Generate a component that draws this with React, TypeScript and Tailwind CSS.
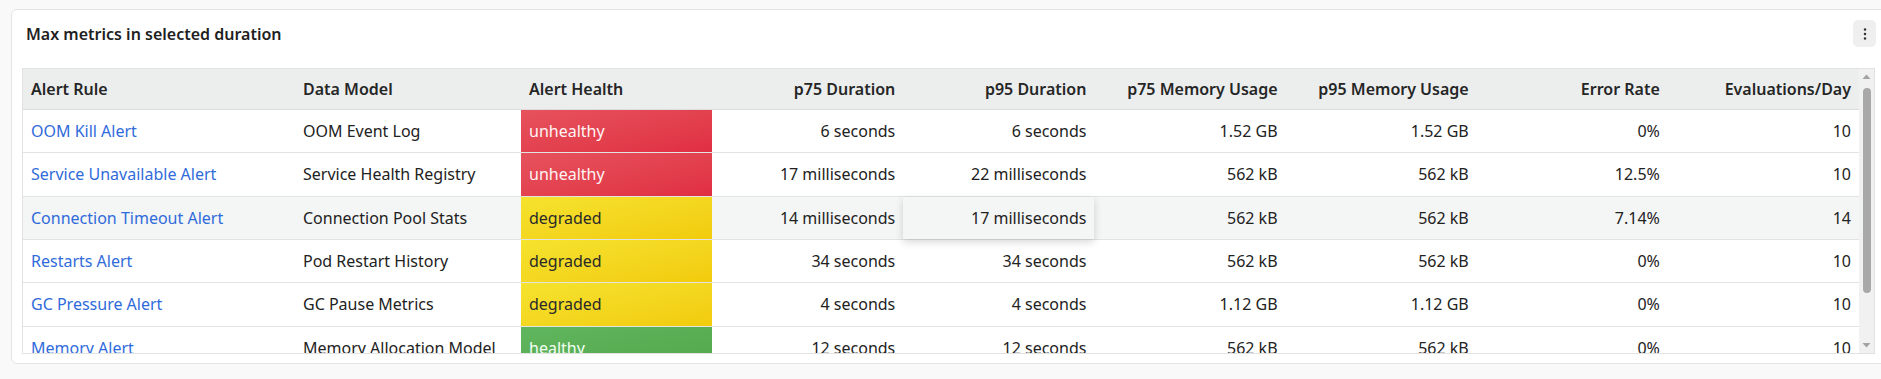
import React from 'react'

type Health = 'unhealthy' | 'degraded' | 'healthy'

interface MetricRow {
  rule: string
  model: string
  health: Health
  p75: string
  p95: string
  p75Mem: string
  p95Mem: string
  errorRate: string
  evals: string
}

const ROWS: MetricRow[] = [
  { rule: 'OOM Kill Alert', model: 'OOM Event Log', health: 'unhealthy', p75: '6 seconds', p95: '6 seconds', p75Mem: '1.52 GB', p95Mem: '1.52 GB', errorRate: '0%', evals: '10' },
  { rule: 'Service Unavailable Alert', model: 'Service Health Registry', health: 'unhealthy', p75: '17 milliseconds', p95: '22 milliseconds', p75Mem: '562 kB', p95Mem: '562 kB', errorRate: '12.5%', evals: '10' },
  { rule: 'Connection Timeout Alert', model: 'Connection Pool Stats', health: 'degraded', p75: '14 milliseconds', p95: '17 milliseconds', p75Mem: '562 kB', p95Mem: '562 kB', errorRate: '7.14%', evals: '14' },
  { rule: 'Restarts Alert', model: 'Pod Restart History', health: 'degraded', p75: '34 seconds', p95: '34 seconds', p75Mem: '562 kB', p95Mem: '562 kB', errorRate: '0%', evals: '10' },
  { rule: 'GC Pressure Alert', model: 'GC Pause Metrics', health: 'degraded', p75: '4 seconds', p95: '4 seconds', p75Mem: '1.12 GB', p95Mem: '1.12 GB', errorRate: '0%', evals: '10' },
  { rule: 'Memory Alert', model: 'Memory Allocation Model', health: 'healthy', p75: '12 seconds', p95: '12 seconds', p75Mem: '562 kB', p95Mem: '562 kB', errorRate: '0%', evals: '10' },
]

const HEALTH_CLASS: Record<Health, string> = {
  unhealthy: 'bg-gradient-to-br from-[#e6525c] to-[#e02e42] text-[#fff4f4]',
  degraded: 'bg-gradient-to-br from-[#f5e32e] to-[#f2cb0b] text-[#2a2a2a]',
  healthy: 'bg-gradient-to-br from-[#60b65e] to-[#53a74c] text-[#f4fff4]',
}

const GRID = 'grid grid-cols-[272px_226px_repeat(7,minmax(0,1fr))]'

function KebabIcon() {
  return (
    <svg width="16" height="16" viewBox="0 0 16 16" fill="#333">
      <circle cx="8" cy="3.4" r="1.25" />
      <circle cx="8" cy="8" r="1.25" />
      <circle cx="8" cy="12.6" r="1.25" />
    </svg>
  )
}

// classic scrollbar as seen in the screenshot
function ScrollTrack() {
  return (
    <div className="flex w-[15px] shrink-0 flex-col items-center bg-[#f1f1f1]">
      <svg width="15" height="15" viewBox="0 0 15 15" className="shrink-0">
        <path d="M3.5 10 L7.5 5.5 L11.5 10 Z" fill="#a3a3a3" />
      </svg>
      <div className="mt-[4px] h-[205px] w-[8px] rounded-[4px] bg-[#a8a8a8]" />
      <div className="flex-1" />
      <svg width="15" height="15" viewBox="0 0 15 15" className="shrink-0">
        <path d="M3.5 5 L7.5 9.5 L11.5 5 Z" fill="#a3a3a3" />
      </svg>
    </div>
  )
}

export default function App() {
  const headers = ['p75 Duration', 'p95 Duration', 'p75 Memory Usage', 'p95 Memory Usage', 'Error Rate', 'Evaluations/Day']

  return (
    <div className="h-[379px] w-full overflow-hidden bg-[#f9f9f9] pt-[9px] pl-[11px] text-[#222] font-['Noto_Sans','Roboto',sans-serif]">
      <div className="w-[1876px] rounded-tl-[6px] rounded-bl-[6px] border border-[#e4e4e4] bg-white pt-[10px] pb-[9px] px-[10px]">
        <div className="flex h-[27px] items-center justify-between">
          <h2 className="pl-[4px] text-[16px] font-semibold text-[#1f1f1f]">Max metrics in selected duration</h2>
          <button className="flex h-[27px] w-[23px] items-center justify-center rounded-[5px] bg-[#efefef]">
            <KebabIcon />
          </button>
        </div>

        <div className="mt-[21px] flex h-[286px] w-[1853px] border border-[#e2e2e2] text-[16px]">
          <div className="min-w-0 flex-1 overflow-hidden">
            <div className={`${GRID} h-[41px] border-b border-[#dcdcdc] bg-[#eceeee] font-semibold text-[#262626]`}>
              <div className="flex items-center px-2">Alert Rule</div>
              <div className="flex items-center px-2">Data Model</div>
              <div className="flex items-center px-2">Alert Health</div>
              {headers.map(h => (
                <div key={h} className="flex items-center justify-end px-2">{h}</div>
              ))}
            </div>

            {ROWS.map((row, i) => {
              const hover = i === 2
              return (
                <div key={row.rule} className={`${GRID} h-[43.33px] border-b border-[#e3e3e3] ${hover ? 'bg-[#f4f5f5]' : 'bg-white'}`}>
                  <div className="flex items-center px-2 text-[#2f6bdb]">{row.rule}</div>
                  <div className="flex items-center px-2">{row.model}</div>
                  <div className={`flex items-center px-2 ${HEALTH_CLASS[row.health]}`}>{row.health}</div>
                  <div className="flex items-center justify-end px-2">{row.p75}</div>
                  <div className={`flex items-center justify-end px-2 ${hover ? 'relative z-[1] bg-[#f4f5f5] shadow-[0_3px_8px_rgba(0,0,0,0.16)]' : ''}`}>{row.p95}</div>
                  <div className="flex items-center justify-end px-2">{row.p75Mem}</div>
                  <div className="flex items-center justify-end px-2">{row.p95Mem}</div>
                  <div className="flex items-center justify-end px-2">{row.errorRate}</div>
                  <div className="flex items-center justify-end px-2">{row.evals}</div>
                </div>
              )
            })}
          </div>
          <ScrollTrack />
        </div>
      </div>
    </div>
  )
}
